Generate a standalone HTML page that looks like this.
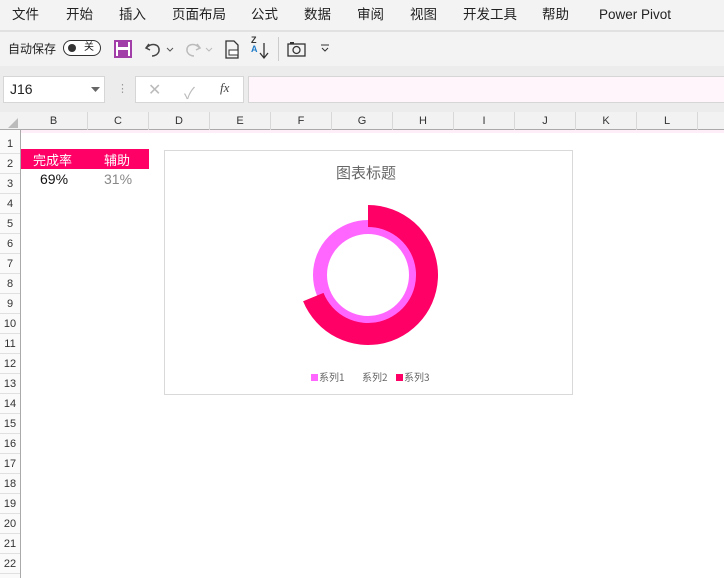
<!DOCTYPE html>
<html><head><meta charset="utf-8"><style>
*{margin:0;padding:0;box-sizing:border-box}
body{width:724px;height:578px;overflow:hidden;background:#fff;font-family:"Liberation Sans","Noto Sans CJK SC",sans-serif;position:relative;color:#222}
.abs{position:absolute}
#menu{left:0;top:0;width:724px;height:30px;background:#f3f3f3;font-size:13.5px}
#menu span{position:absolute;top:0;line-height:30px}
#tb{left:0;top:30px;width:724px;height:36px;background:#f3f3f3;border-top:2px solid #e1e1e1}
#fb{left:0;top:66px;width:724px;height:46px;background:#ececec}
.box{position:absolute;background:#fff;border:1px solid #d6d6d6}
.ch{position:absolute;top:112px;height:18px;font-size:11px;text-align:center;line-height:18px;color:#333;border-right:1px solid #d8d8d8}
.rh{position:absolute;left:0;width:20px;height:20px;font-size:11px;text-align:center;line-height:20px;color:#333;border-bottom:1px solid #e0e0e0}
</style></head><body>
<div id="menu" class="abs">
<span style="left:12px">文件</span><span style="left:66px">开始</span><span style="left:119px">插入</span><span style="left:172px">页面布局</span><span style="left:251px">公式</span><span style="left:304px">数据</span><span style="left:357px">审阅</span><span style="left:410px">视图</span><span style="left:463px">开发工具</span><span style="left:542px">帮助</span><span style="left:599px">Power Pivot</span>
</div>
<div id="tb" class="abs">
<span class="abs" style="left:8px;top:8px;font-size:12px">自动保存</span>
<div class="abs" style="left:63px;top:8px;width:38px;height:16px;border:1.5px solid #333;border-radius:8px;background:#fff"><div class="abs" style="left:4px;top:3px;width:8px;height:8px;border-radius:50%;background:#333"></div><span class="abs" style="left:20px;top:0;font-size:10px;line-height:13px">关</span></div>
<svg class="abs" style="left:114px;top:8px" width="18" height="18"><rect x="1" y="1" width="16" height="16" fill="#fff" stroke="#a23ea8" stroke-width="2"/><rect x="4" y="2" width="10" height="5" fill="#a23ea8"/><rect x="4" y="10" width="10" height="6" fill="#a23ea8"/></svg>
<svg class="abs" style="left:144px;top:8px" width="32" height="18"><path d="M5 4 L2 8 L6 10 M2.5 8 C6 3 16 3 15 11 C14 15 10 16 8 16" fill="none" stroke="#444" stroke-width="1.5"/><path d="M23 8 l3 3 l3 -3" fill="none" stroke="#555"/></svg>
<svg class="abs" style="left:184px;top:8px" width="32" height="18"><path d="M13 4 L16 8 L12 10 M15.5 8 C12 3 2 3 3 11 C4 15 8 16 10 16" fill="none" stroke="#bbb" stroke-width="1.5"/><path d="M22 8 l3 3 l3 -3" fill="none" stroke="#bbb"/></svg>
<svg class="abs" style="left:224px;top:8px" width="16" height="20"><path d="M2 1h8l4 4v13H2z" fill="none" stroke="#333" stroke-width="1.3"/><rect x="5" y="10" width="9" height="5" fill="#fff" stroke="#333"/></svg>
<span class="abs" style="left:251px;top:4px;font-size:9px;font-weight:bold;color:#333;line-height:9px">Z<br><span style="color:#1e7ac8">A</span></span>
<svg class="abs" style="left:258px;top:10px" width="12" height="18"><path d="M6 1v14 M2 11l4 5 4-5" fill="none" stroke="#333" stroke-width="1.3"/></svg>
<div class="abs" style="left:278px;top:5px;width:1px;height:24px;background:#ccc"></div>
<svg class="abs" style="left:287px;top:9px" width="20" height="16"><rect x="1" y="3" width="17" height="12" fill="none" stroke="#333" stroke-width="1.3"/><circle cx="9.5" cy="9" r="3.5" fill="none" stroke="#333" stroke-width="1.3"/><rect x="3" y="1" width="4" height="2" fill="#333"/></svg>
<svg class="abs" style="left:320px;top:12px" width="10" height="8"><path d="M1 1h8 M2 4l3 3 3-3" fill="none" stroke="#333"/></svg>
</div>
<div id="fb" class="abs">
<div class="box" style="left:3px;top:10px;width:102px;height:27px"><span class="abs" style="left:6px;top:4px;font-size:14px">J16</span><svg class="abs" style="left:87px;top:10px" width="9" height="6"><path d="M0 0h9L4.5 5z" fill="#666"/></svg></div>
<span class="abs" style="left:117px;top:16px;color:#999;font-size:11px">⋮</span>
<div class="box" style="left:135px;top:10px;width:109px;height:27px"><span class="abs" style="left:12px;top:3px;color:#bbb;font-size:16px">✕</span><span class="abs" style="left:48px;top:3px;color:#bbb;font-size:16px">✓</span><span class="abs" style="left:84px;top:3px;color:#444;font-size:13px;font-family:'Liberation Serif',serif;font-style:italic">fx</span></div>
<div class="box" style="left:248px;top:10px;width:480px;height:27px;background:#fff5fb"></div>
</div>
<div class="abs" style="left:0;top:112px;width:724px;height:18px;background:#f2f2f2;border-bottom:1px solid #aaa"></div>
<svg class="abs" style="left:8px;top:118px" width="10" height="10"><path d="M10 0V10H0z" fill="#bbb"/></svg>
<div class="abs" style="left:20px;top:130px;width:704px;height:3px;background:#fdeef7"></div>
<div class="ch" style="left:20px;width:68px">B</div><div class="ch" style="left:88px;width:61px">C</div><div class="ch" style="left:149px;width:61px">D</div><div class="ch" style="left:210px;width:61px">E</div><div class="ch" style="left:271px;width:61px">F</div><div class="ch" style="left:332px;width:61px">G</div><div class="ch" style="left:393px;width:61px">H</div><div class="ch" style="left:454px;width:61px">I</div><div class="ch" style="left:515px;width:61px">J</div><div class="ch" style="left:576px;width:61px">K</div><div class="ch" style="left:637px;width:61px">L</div>
<div class="abs" style="left:0;top:130px;width:21px;height:448px;background:#fafafa;border-right:1px solid #aaa"></div>
<div class="rh" style="top:134px">1</div><div class="rh" style="top:154px">2</div><div class="rh" style="top:174px">3</div><div class="rh" style="top:194px">4</div><div class="rh" style="top:214px">5</div><div class="rh" style="top:234px">6</div><div class="rh" style="top:254px">7</div><div class="rh" style="top:274px">8</div><div class="rh" style="top:294px">9</div><div class="rh" style="top:314px">10</div><div class="rh" style="top:334px">11</div><div class="rh" style="top:354px">12</div><div class="rh" style="top:374px">13</div><div class="rh" style="top:394px">14</div><div class="rh" style="top:414px">15</div><div class="rh" style="top:434px">16</div><div class="rh" style="top:454px">17</div><div class="rh" style="top:474px">18</div><div class="rh" style="top:494px">19</div><div class="rh" style="top:514px">20</div><div class="rh" style="top:534px">21</div><div class="rh" style="top:554px">22</div>
<div class="abs" style="left:21px;top:149px;width:128px;height:20px;background:#ff0066;color:#fff;font-size:13px"><span class="abs" style="left:12px;top:1px">完成率</span><span class="abs" style="left:83px;top:1px">辅助</span></div>
<span class="abs" style="left:40px;top:171px;font-size:14px;color:#111">69%</span>
<span class="abs" style="left:104px;top:171px;font-size:14px;color:#888">31%</span>
<div class="abs" style="left:164px;top:150px;width:409px;height:245px;border:1px solid #d9d9d9;background:#fff"></div>
<span class="abs" style="left:336px;top:162px;font-size:15px;color:#666">图表标题</span>
<svg class="abs" style="left:0;top:0" width="724" height="578">
<circle cx="368" cy="275" r="48" fill="none" stroke="#ff66ff" stroke-width="14"/>
<path d="M368 205 A70 70 0 1 1 303.1 301.2 L323.5 292.9 A48 48 0 1 0 368 227 Z" fill="#ff0066"/>
<rect x="311" y="374" width="7" height="7" fill="#ff66ff"/>
<rect x="396" y="374" width="7" height="7" fill="#ff0066"/>
<text x="319" y="381" font-size="10" fill="#666" font-family="Noto Sans CJK SC,sans-serif">系列1</text>
<text x="362" y="381" font-size="10" fill="#666" font-family="Noto Sans CJK SC,sans-serif">系列2</text>
<text x="404" y="381" font-size="10" fill="#666" font-family="Noto Sans CJK SC,sans-serif">系列3</text>
</svg>
</body></html>
